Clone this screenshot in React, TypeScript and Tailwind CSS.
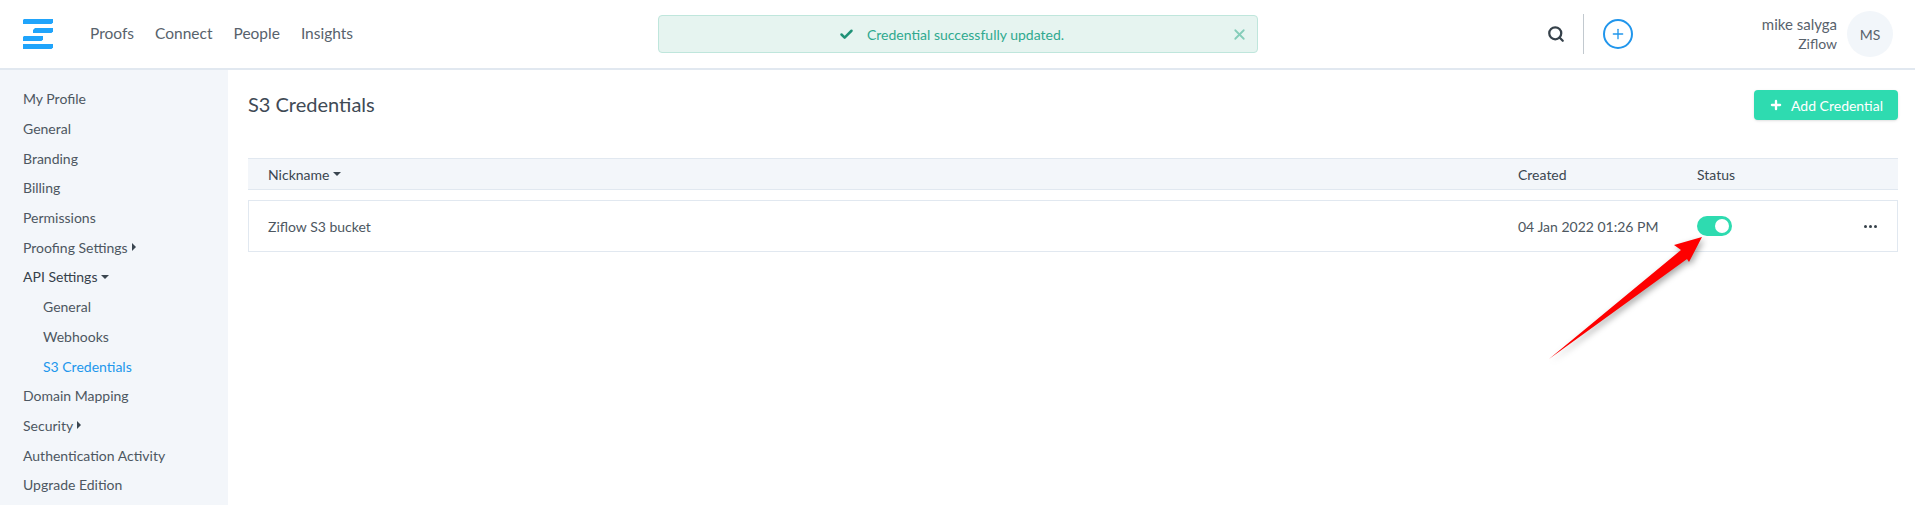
import { Check, Search, Plus, X } from 'lucide-react';

const sideItems = [
  { label: 'My Profile' },
  { label: 'General' },
  { label: 'Branding' },
  { label: 'Billing' },
  { label: 'Permissions' },
  { label: 'Proofing Settings', caret: 'right' },
  { label: 'API Settings', caret: 'down', strong: true },
  { label: 'General', sub: true },
  { label: 'Webhooks', sub: true },
  { label: 'S3 Credentials', sub: true, active: true },
  { label: 'Domain Mapping' },
  { label: 'Security', caret: 'right' },
  { label: 'Authentication Activity' },
  { label: 'Upgrade Edition' },
];

function Logo() {
  return (
    <svg width="30" height="30" viewBox="0 0 30 30" fill="#20a4fb">
      <path d="M1 0H30V3.5L28.5 5H0V1Z" />
      <path d="M12 9H30V12.5L28.5 14H10V11Z" />
      <path d="M1 17H20V20.5L18.5 22H0V18Z" />
      <path d="M0 25H30V28.5L28.5 30H0Z" />
    </svg>
  );
}

function CaretRight() {
  return <span className="ml-1 inline-block border-y-[4px] border-l-[4px] border-y-transparent border-l-[#3b4650]" />;
}

function CaretDown() {
  return <span className="ml-1 inline-block border-x-[4px] border-t-[4px] border-x-transparent border-t-[#3b4650]" />;
}

export default function App() {
  return (
    <div className="relative flex h-[505px] w-[1915px] flex-col overflow-hidden bg-white font-['Lato',sans-serif] text-[14px] text-[#4d5761]">
      <header className="flex h-[70px] shrink-0 items-center border-b-2 border-[#e1e8f0] pl-[23px] pr-[22px]">
        <Logo />
        <nav className="ml-[37px] flex w-[568px] gap-[21px] text-[15.5px] text-[#58626c]">
          <a>Proofs</a>
          <a>Connect</a>
          <a>People</a>
          <a>Insights</a>
        </nav>
        <div className="relative flex h-[38px] w-[600px] items-center rounded border border-[#bfe6dc] bg-[#e6f4f0] pl-[180px] text-[#2fa98f]">
          <Check size={15} strokeWidth={4} className="text-[#1f9277]" />
          <span className="ml-[13px]">Credential successfully updated.</span>
          <X size={17} strokeWidth={2.5} className="ml-auto mr-[9px] text-[#85cdb9]" />
        </div>
        <Search size={18} strokeWidth={3} className="ml-[289px] text-[#36414a]" />
        <div className="ml-[18px] h-[40px] w-px bg-[#c2c9cf]" />
        <div className="ml-[19px] flex h-[30px] w-[30px] items-center justify-center rounded-full border-2 border-[#2196ec] text-[#2196ec]">
          <Plus size={16} strokeWidth={2} />
        </div>
        <div className="ml-auto text-right leading-[20px]">
          <div className="text-[15px] text-[#58626c]">mike salyga</div>
          <div className="text-[#58626c]">Ziflow</div>
        </div>
        <div className="ml-[10px] flex h-[46px] w-[46px] items-center justify-center rounded-full bg-[#f2f6fa] text-[#58626c]">MS</div>
      </header>

      <div className="flex min-h-0 flex-1">
        <aside className="w-[228px] shrink-0 bg-[#f3f6fa] pl-[23px] pt-[14px]">
          {sideItems.map((item, i) => (
            <div
              key={i}
              className={`flex h-[29.7px] items-center ${item.sub ? 'pl-[20px]' : ''} ${item.active ? 'text-[#2196ec]' : ''} ${item.strong ? 'text-[#36414a]' : ''}`}
            >
              {item.label}
              {item.caret === 'right' && <CaretRight />}
              {item.caret === 'down' && <CaretDown />}
            </div>
          ))}
        </aside>

        <main className="flex-1 pl-[20px] pr-[17px]">
          <div className="flex items-start justify-between pt-[20px]">
            <h1 className="text-[20px] leading-[28px] text-[#3f4a55]">S3 Credentials</h1>
            <button className="flex h-[30px] w-[144px] items-center justify-center rounded bg-[#2edbb0] text-white shadow-sm">
              <Plus size={14} strokeWidth={4} />
              <span className="ml-[8px]">Add Credential</span>
            </button>
          </div>

          <div className="mt-[38px] grid h-[32px] grid-cols-[1250px_179px_1fr] items-center border-y border-[#e1e8f0] bg-[#f3f6fa] pl-[20px] text-[#3b4650]">
            <div className="flex items-center">
              Nickname
              <CaretDown />
            </div>
            <div>Created</div>
            <div>Status</div>
          </div>

          <div className="mt-[10px] grid h-[52px] grid-cols-[1250px_179px_1fr] items-center border border-[#e1e8f0] pl-[19px]">
            <div>Ziflow S3 bucket</div>
            <div>04 Jan 2022 01:26 PM</div>
            <div className="flex items-center justify-between pr-[20px]">
              <div className="flex h-[20px] w-[35px] items-center justify-end rounded-full bg-[#2edbb0] pr-[3px]">
                <div className="h-[14px] w-[14px] rounded-full bg-white" />
              </div>
              <svg width="13" height="3" viewBox="0 0 13 3" fill="#36414a">
                <circle cx="1.5" cy="1.5" r="1.5" />
                <circle cx="6.5" cy="1.5" r="1.5" />
                <circle cx="11.5" cy="1.5" r="1.5" />
              </svg>
            </div>
          </div>
        </main>
      </div>

      {/* annotation arrow sits over the page */}
      <svg className="absolute left-[1540px] top-[230px] drop-shadow-[2px_3px_3px_rgba(0,0,0,0.35)]" width="170" height="135" viewBox="0 0 170 135">
        <path d="M162 7L134 15L141 20L9 129L147 29L149 32Z" fill="#fe0000" />
      </svg>
    </div>
  );
}
